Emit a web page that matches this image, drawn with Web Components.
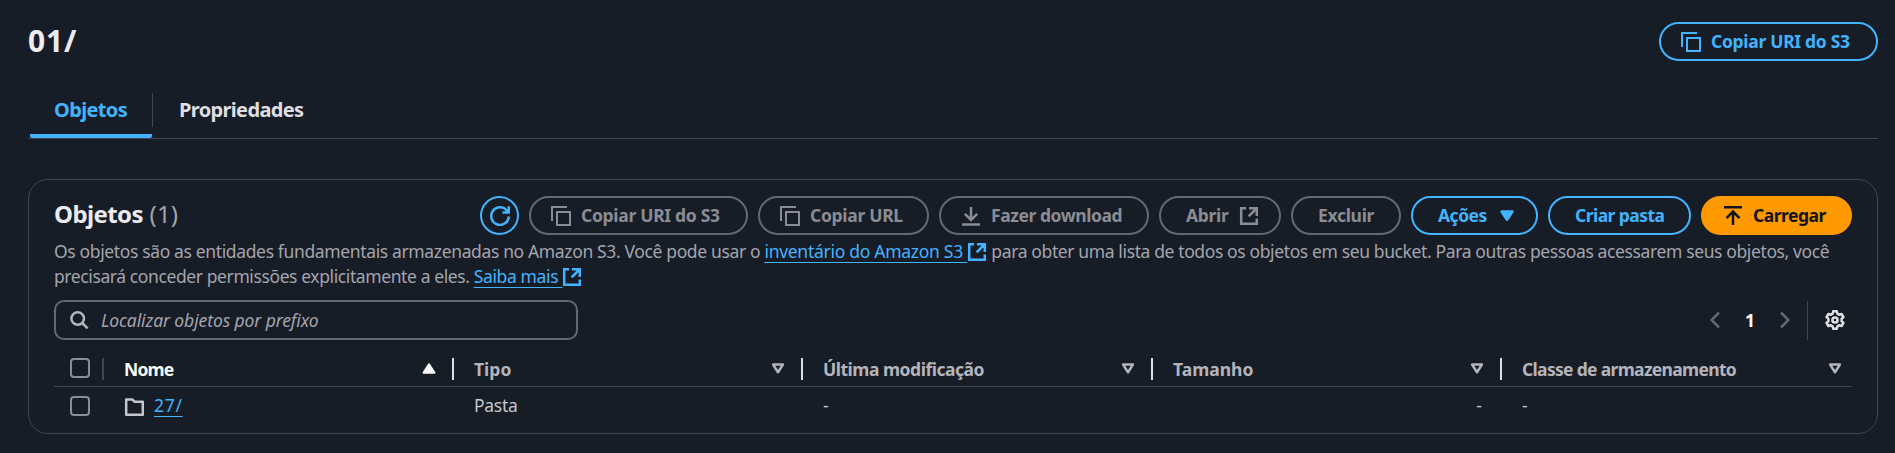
<!DOCTYPE html>
<html lang="pt-BR">
<head>
<meta charset="utf-8">
<title>01/ - Amazon S3</title>
<style>
html,body{margin:0;background:#161d26;}
body{font-family:"Noto Sans","Open Sans",sans-serif;font-size:17.5px;line-height:25px;color:#c6c6cd;height:453px;overflow:hidden}
</style>
</head>
<body>
<s3-folder-page></s3-folder-page>
<script>
const ICONS={
 copy:'<path d="M1 15V1h15M6 6h13v13H6z" stroke-width="2"/>',
 refresh:'<path d="M18.8 10.5A8.8 8.800 0 1 1 16.400 4L18.400 6.200M12.400 6.500h6.400V.2"/>',
 download:'<path d="M10 1v12.500M3.800 7.800l6.200 6.100 6.200-6.100M1 18.400h18"/>',
 upload:'<path d="M10 19V6M3.500 12.100L10 5.600l6.500 6.500M1 1.200h18"/>',
 external:'<path d="M7 2.200H2.200v15.600h15.600v-5.300M10 2.200h7.800V10M17.500 2.500L9.600 10.400"/>',
 caret:'<path d="M4.500 5.600h11L10 13.800z" fill="currentColor" stroke-linejoin="round"/>',
 up:'<path d="M4.800 13.600h10.400L10 5.600z" fill="currentColor" stroke-linejoin="round"/>',
 down:'<path d="M5.100 5.600h9.800L10 13.200z" stroke-linejoin="round"/>',
 search:'<circle cx="7.700" cy="8.500" r="6.300"/><path d="M12.200 13l5.400 5.400"/>',
 folder:'<path d="M2.200 3.400h6l2.200 2.300h8.400v13H2.200z" stroke-linejoin="round"/>',
 prev:'<path d="M14 2.600L6.600 10l7.400 7.400"/>',
 next:'<path d="M6 2.600l7.400 7.400L6 17.400"/>',
 gear:'<path d="M8.300 1.200h3.400l.7 2.500 1.700 1 2.500-.7 1.800 3-1.800 1.800v2.400l1.800 1.800-1.800 3-2.500-.7-1.700 1-.7 2.500H8.300l-.7-2.500-1.700-1-2.500.7-1.800-3 1.800-1.800V8.800L1.600 7l1.800-3 2.500.7 1.700-1z" stroke-linejoin="round"/><circle cx="10" cy="10" r="2.600"/>'
};
function define(name,css,html){
 customElements.define(name,class extends HTMLElement{
  constructor(){super();this.attachShadow({mode:'open'}).innerHTML='<style>*{box-sizing:border-box}'+css+'</style>'+(typeof html==='function'?html(this):html);}
 });
}
define('s3-icon',':host{display:inline-block;width:20px;height:20px;flex:none}svg{display:block;width:20px;height:20px;fill:none;stroke:currentColor;stroke-width:2.5}',
 e=>'<svg viewBox="0 0 20 20">'+ICONS[e.getAttribute('name')]+'</svg>');
define('s3-button',`:host{display:block;flex:none;width:var(--w)}
 button{display:flex;align-items:center;width:100%;height:39px;margin:0;padding:0 20px;border:2px solid currentColor;border-radius:20px;background:none;color:#42b4ff;font:700 17.5px/25px "Noto Sans","Open Sans",sans-serif;gap:10px;white-space:nowrap;letter-spacing:var(--ls,-.3px)}
 :host([text]) button{padding-left:25px;justify-content:space-between}
 :host([round]) button{padding:0;justify-content:center}
 :host([disabled]) button{border-color:#656871;color:#8c8c94}
 :host([primary]) button{background:#ff9900;border-color:#ff9900;color:#0f141a}`,
 '<button><slot name="before"></slot><slot></slot><slot name="after"></slot></button>');
define('s3-link','a{color:#42b4ff;text-decoration:underline;text-decoration-thickness:1px;text-underline-offset:4px;text-decoration-skip-ink:none}','<a href="#"><slot></slot></a>');
define('s3-checkbox',':host{display:block;width:20px;height:20px;border:2px solid #8c8c94;border-radius:4px;box-sizing:border-box}','');
define('s3-tabs',`:host{display:flex;height:46px;border-bottom:1px solid #424650;font:700 20px/25px "Noto Sans","Open Sans",sans-serif;letter-spacing:-.65px;color:#dedee3;padding-left:2px}
 div{white-space:nowrap}
 .a{width:122px;color:#42b4ff;padding:4px 0 0 24px;border-bottom:4px solid #42b4ff;border-radius:2px;height:45px}
 i{width:1px;height:34px;background:#424650}
 .b{padding:4px 0 0 26px}`,
 '<div class="a"><span>Objetos</span></div><i></i><div class="b"><span>Propriedades</span></div>');
define('s3-search',`:host{display:flex;align-items:center;width:524px;height:40px;border:2px solid #656871;border-radius:10px;padding-left:14px;gap:11px;box-sizing:border-box}
 s3-icon{color:#b4b4bb}span{font-style:italic;color:#a4a4ad;letter-spacing:-.1px}`,'<s3-icon name="search"></s3-icon><span>Localizar objetos por prefixo</span>');
define('s3-pagination',`:host{display:flex;align-items:center;height:40px;color:#656871;padding-right:7px}
 b{color:#f9f9fa;width:50px;text-align:center}i{width:1px;height:39px;background:#424650;margin:0 17px 0 12px}.g{color:#dedee3}`,
 '<s3-icon name="prev"></s3-icon><b>1</b><s3-icon name="next"></s3-icon><i></i><s3-icon class="g" name="gear"></s3-icon>');
define('s3-column',`:host{display:flex;align-items:center;height:22px;padding:0 13px 0 20px;justify-content:space-between;border-right:2px solid #dedee3;font-weight:700;color:#b4b4bb;box-sizing:border-box}
 :host([active]){color:#f9f9fa}:host([last]){border-right:0;padding-right:7px}`,
 e=>'<span><slot></slot></span><s3-icon name="'+(e.hasAttribute('active')?'up':'down')+'"></s3-icon>');
define('s3-table',`:host{display:block}
 .r{display:grid;grid-template-columns:50px 350px 349px 350px 349px 1fr;align-items:center}
 .h{height:47px;padding-top:18px;border-bottom:1px solid #424650;align-items:start}
 .d{height:38px;color:#c6c6cd}.d>*{padding:0 0 2px 20px}
 .c{height:22px;border-right:2px solid #424650;padding-left:16px}.d .c{border:0;padding:0 0 0 16px;height:20px}
 .n{display:flex;align-items:center;gap:10px}.n s3-icon{position:relative;top:1px}.n s3-link{letter-spacing:.7px}.d .right{text-align:right;padding-right:20px}`,
 `<div class="r h"><div class="c"><s3-checkbox></s3-checkbox></div><s3-column active style="letter-spacing:-.8px">Nome</s3-column><s3-column>Tipo</s3-column><s3-column style="letter-spacing:-.48px">Última modificação</s3-column><s3-column>Tamanho</s3-column><s3-column last style="letter-spacing:-.68px">Classe de armazenamento</s3-column></div>
 <div class="r d"><div class="c"><s3-checkbox></s3-checkbox></div><div class="n"><s3-icon name="folder"></s3-icon><s3-link>27/</s3-link></div><div style="letter-spacing:-.3px">Pasta</div><div>-</div><div class="right">-</div><div>-</div></div>`);
define('s3-panel',`:host{display:block;height:255px;border:1px solid #424650;border-radius:20px;padding:16px 25px 0;box-sizing:border-box}
 .top{display:flex;align-items:center;gap:10px;height:39px}
 h2{flex:1;margin:0;padding-bottom:3px;font-size:24px;letter-spacing:-.6px;line-height:30px;color:#ebebf0;white-space:nowrap}h2 span{font-weight:400;color:#a4a4ad;letter-spacing:.2px;margin-left:1px}
 p{margin:4px 0 0;height:50px;color:#a4a4ad;white-space:nowrap;letter-spacing:-.36px}
 p s3-icon{vertical-align:-4px;color:#42b4ff}
 .f{display:flex;justify-content:space-between;margin-top:11px}`,
 `<div class="top"><h2>Objetos <span>(1)</span></h2>
 <s3-button round style="--w:39px"><s3-icon slot="before" name="refresh"></s3-icon></s3-button>
 <s3-button disabled style="--w:219px"><s3-icon slot="before" name="copy"></s3-icon><span>Copiar URI do S3</span></s3-button>
 <s3-button disabled style="--w:171px"><s3-icon slot="before" name="copy"></s3-icon><span>Copiar URL</span></s3-button>
 <s3-button disabled style="--w:210px;--ls:-.44px"><s3-icon slot="before" name="download"></s3-icon><span>Fazer download</span></s3-button>
 <s3-button disabled text style="--w:122px"><span>Abrir</span><s3-icon slot="after" name="external"></s3-icon></s3-button>
 <s3-button disabled text style="--w:110px"><span>Excluir</span></s3-button>
 <s3-button text style="--w:127px;--ls:-.5px"><span>Ações</span><s3-icon slot="after" name="caret"></s3-icon></s3-button>
 <s3-button text style="--w:143px;--ls:-.55px"><span>Criar pasta</span></s3-button>
 <s3-button primary style="--w:151px;--ls:-.5px"><s3-icon slot="before" name="upload"></s3-icon><span>Carregar</span></s3-button></div>
 <p><span>Os objetos são as entidades fundamentais armazenadas no Amazon S3. Você pode usar o </span><s3-link style="letter-spacing:-.28px">inventário do Amazon S3&nbsp;</s3-link><s3-icon name="external"></s3-icon><span style="letter-spacing:-.38px"> para obter uma lista de todos os objetos em seu bucket. Para outras pessoas acessarem seus objetos, você</span><br><span style="letter-spacing:-.4px">precisará conceder permissões explicitamente a eles. </span><s3-link>Saiba mais&nbsp;</s3-link><s3-icon name="external"></s3-icon></p>
 <div class="f"><s3-search></s3-search><s3-pagination></s3-pagination></div>
 <s3-table></s3-table>`);
define('s3-folder-page',`:host{display:block;padding:22px 17px 0 28px;height:453px;box-sizing:border-box}
 header{display:flex;justify-content:space-between;height:39px;margin-bottom:32px}
 h1{margin:0;font-size:30px;line-height:38px;letter-spacing:.8px;color:#ebebf0}
 s3-panel{margin-top:40px}`,
 `<header><h1>01/</h1><s3-button style="--w:219px"><s3-icon slot="before" name="copy"></s3-icon><span>Copiar URI do S3</span></s3-button></header><s3-tabs></s3-tabs><s3-panel></s3-panel>`);
</script>
</body>
</html>
